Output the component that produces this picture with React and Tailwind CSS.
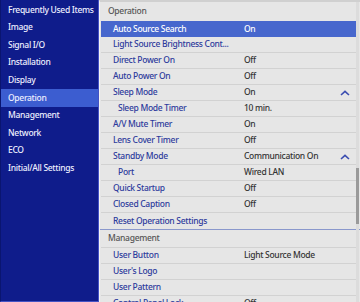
import React from 'react';

const navItems = [
  'Frequently Used Items',
  'Image',
  'Signal I/O',
  'Installation',
  'Display',
  'Operation',
  'Management',
  'Network',
  'ECO',
  'Initial/All Settings',
];

const operationRows = [
  { label: 'Auto Source Search', value: 'On', active: true },
  { label: 'Light Source Brightness Cont...' },
  { label: 'Direct Power On', value: 'Off' },
  { label: 'Auto Power On', value: 'Off' },
  { label: 'Sleep Mode', value: 'On', open: true },
  { label: 'Sleep Mode Timer', value: '10 min.', sub: true },
  { label: 'A/V Mute Timer', value: 'On' },
  { label: 'Lens Cover Timer', value: 'Off' },
  { label: 'Standby Mode', value: 'Communication On', open: true },
  { label: 'Port', value: 'Wired LAN', sub: true },
  { label: 'Quick Startup', value: 'Off' },
  { label: 'Closed Caption', value: 'Off' },
  { label: 'Reset Operation Settings', last: true },
];

const managementRows = [
  { label: 'User Button', value: 'Light Source Mode' },
  { label: "User's Logo" },
  { label: 'User Pattern' },
  { label: 'Control Panel Lock', value: 'Off' },
];

function ChevronUp() {
  return (
    <svg width="10" height="6" viewBox="0 0 10 6" className="text-[#3a4cb0]">
      <path d="M1 5 L5 1.3 L9 5" fill="none" stroke="currentColor" strokeWidth="1.6" />
    </svg>
  );
}

function Row({ row }) {
  return (
    <div
      className={`flex items-center h-[16px] shrink-0 ${
        row.active ? 'bg-[#4767cd] text-white' : 'border-b border-[#d2d2d2]'
      } ${row.last ? 'border-b-0' : ''}`}
    >
      <div
        className={`${row.sub ? 'pl-[17px]' : 'pl-[12px]'} w-[143px] shrink-0 whitespace-nowrap ${
          row.active ? 'text-white' : 'text-[#2c3a9c]'
        }`}
      >
        {row.label}
      </div>
      <div className={`flex-1 whitespace-nowrap ${row.active ? 'text-white' : 'text-[#333333]'}`}>{row.value}</div>
      {row.open && (
        <div className="w-[16px] shrink-0 mr-[3px] flex justify-center">
          <ChevronUp />
        </div>
      )}
    </div>
  );
}

export default function App() {
  return (
    <div
      className="w-[360px] h-[302px] flex overflow-hidden bg-[#e6e6e6] text-[8.5px] font-medium tracking-[-0.3px] leading-none"
      style={{ fontFamily: '"Noto Sans", "Open Sans", sans-serif' }}
    >
      <div className="w-[99px] shrink-0 bg-[#0f1c8b] border-r border-[#4453c4] border-b border-l border-l-[#0a1570] border-b-[#4453c4] pt-[1px] flex flex-col">
        {navItems.map((item) => (
          <div
            key={item}
            className={`h-[17.6px] shrink-0 flex items-center pl-[7px] whitespace-nowrap text-[#eef0ff] ${
              item === 'Operation' ? 'bg-[#3c5dd0]' : ''
            }`}
          >
            {item}
          </div>
        ))}
      </div>

      <div className="flex-1 relative border-l border-[#f4f4f4] border-t-2 border-t-[#d0d0d0] flex flex-col">
        <div className="flex flex-col pl-[1px] pr-[4px]">
          <div className="h-[19px] shrink-0 flex items-center pl-[7px] text-[#555555]">Operation</div>
          {operationRows.map((row) => (
            <Row key={row.label} row={row} />
          ))}
        </div>
        <div className="h-[1px] bg-[#8a98cc] shrink-0" />
        <div className="flex flex-col pl-[1px] pr-[4px]">
          <div className="h-[18px] shrink-0 flex items-center pl-[7px] text-[#555555] border-b border-[#d2d2d2]">
            Management
          </div>
          {managementRows.map((row) => (
            <Row key={row.label} row={row} />
          ))}
        </div>

        <div className="absolute right-[1px] top-0 bottom-0 w-[3px] bg-[#dcdcdc]">
          <div className="absolute left-0 right-0 top-[166px] h-[56px] bg-[#9a9a9a]" />
        </div>
      </div>
    </div>
  );
}
